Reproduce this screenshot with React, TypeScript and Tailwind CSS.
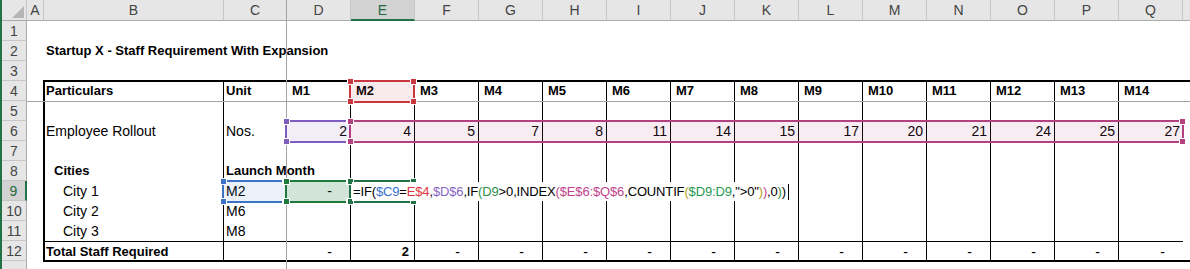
import React from "react";

const letters = ["D", "E", "F", "G", "H", "I", "J", "K", "L", "M", "N", "O", "P", "Q"];
const months = letters.map((_, i) => `M${i + 1}`);
const rollout = [2, 4, 5, 7, 8, 11, 14, 15, 17, 20, 21, 24, 25, 27];

// formula bar pieces, coloured like Excel's reference highlighting
const formula: [string, string][] = [
    ["=IF(", "text-black"],
    ["$C9", "text-[#3a73cf]"],
    ["=", "text-black"],
    ["E$4", "text-[#e0363f]"],
    [",", "text-black"],
    ["$D$6", "text-[#8a66c4]"],
    [",IF", "text-black"],
    ["(", "text-[#2f8f46]"],
    ["D9", "text-[#2f8f46]"],
    [">0,INDEX", "text-black"],
    ["(", "text-[#c2448c]"],
    ["$E$6:$Q$6", "text-[#c2448c]"],
    [",COUNTIF", "text-black"],
    ["(", "text-[#b59a1c]"],
    ["$D9:D9", "text-[#1f9a50]"],
    [',">0"', "text-black"],
    [")", "text-[#b59a1c]"],
    [")", "text-[#c2448c]"],
    [",0", "text-black"],
    [")", "text-[#2f8f46]"],
    [")", "text-black"],
];

function Cell({ col, last, className = "", children }: { col: number; last?: boolean; className?: string; children?: React.ReactNode }) {
    // col 0 = B, 1 = C, 2..15 = D..Q ; no black line between C and D, Q edge comes from the outline
    const right = col === 0 || (col >= 2 && col < 15) ? "border-r border-black" : "";
    const top = last ? "border-t border-black" : "";
    return (
        <div className={`h-[20px] whitespace-nowrap leading-[20px] ${right} ${top} ${className}`}>
            {children}
        </div>
    );
}

function ColumnHeaders() {
    return (
        <div className="flex h-[21px] shrink-0 bg-[#e6e6e6] leading-[20px] text-[#444]">
            <div className="relative w-[25px] shrink-0 border-r border-b border-r-[#c6c6c6] border-b-[#ababab]">
                <svg className="absolute left-[10px] top-[6px]" width="12" height="12" viewBox="0 0 12 12">
                    <polygon points="12,0 12,12 0,12" fill="#b5b5b5" />
                </svg>
            </div>
            <div className="w-[17px] shrink-0 border-r border-b border-r-[#c6c6c6] border-b-[#ababab] text-center">A</div>
            <div className="w-[180px] shrink-0 border-r border-b border-r-[#c6c6c6] border-b-[#ababab] text-center">B</div>
            <div className="w-[63px] shrink-0 border-r border-b border-r-[#a3a3a3] border-b-[#ababab] text-center">C</div>
            {letters.map((l) =>
                l === "E" ? (
                    <div key={l} className="w-[64px] shrink-0 border-r border-b-2 border-r-[#c6c6c6] border-b-[#217346] bg-[#d2d2d2] text-center text-[#1d6a3c]">
                        {l}
                    </div>
                ) : (
                    <div key={l} className="w-[64px] shrink-0 border-r border-b border-r-[#c6c6c6] border-b-[#ababab] text-center">
                        {l}
                    </div>
                )
            )}
            <div className="flex-1 border-b border-[#ababab]" />
        </div>
    );
}

function RowHeaders() {
    return (
        <div className="flex w-[25px] shrink-0 flex-col bg-[#e6e6e6] leading-[20px] text-[#444]">
            {Array.from({ length: 12 }, (_, i) =>
                i === 8 ? (
                    <div key={i} className="h-[20px] border-r-2 border-b border-r-[#217346] border-b-[#c6c6c6] bg-[#d2d2d2] text-center text-[#1d6a3c]">
                        {i + 1}
                    </div>
                ) : (
                    <div key={i} className="h-[20px] border-r border-b border-r-[#ababab] border-b-[#c6c6c6] text-center">
                        {i + 1}
                    </div>
                )
            )}
            <div className="flex-1 border-r border-[#ababab]" />
        </div>
    );
}

function Box({ className, handle }: { className: string; handle: string }) {
    return (
        <div className={`pointer-events-none absolute h-[23px] border-2 ${className}`}>
            <span className={`absolute -left-[4px] -top-[4px] h-[7px] w-[7px] border border-white ${handle}`} />
            <span className={`absolute -right-[4px] -top-[4px] h-[7px] w-[7px] border border-white ${handle}`} />
            <span className={`absolute -left-[4px] -bottom-[4px] h-[7px] w-[7px] border border-white ${handle}`} />
            <span className={`absolute -right-[4px] -bottom-[4px] h-[7px] w-[7px] border border-white ${handle}`} />
        </div>
    );
}

function Sheet() {
    return (
        <div className="relative flex min-w-0 flex-1 flex-col">
            {/* rows 1-3 */}
            <div className="h-[20px]" />
            <div className="h-[20px] whitespace-nowrap pl-[19px] text-[13px] font-bold leading-[20px]">
                Startup X - Staff Requirement With Expansion
            </div>
            <div className="h-[20px]" />

            {/* table B4:Q12 */}
            <div className="ml-[17px] grid w-[1156px] grid-cols-[180px_63px_repeat(14,64px)] outline-2 -outline-offset-1 outline-black">
                {/* row 4 */}
                <Cell col={0} className="pl-[2px] text-[13px] font-bold">Particulars</Cell>
                <Cell col={1} className="pl-[2px] text-[13px] font-bold">Unit</Cell>
                {months.map((m, i) => (
                    <Cell key={m} col={i + 2} className="pl-[5px] text-[13px] font-bold">{m}</Cell>
                ))}

                {/* row 5 */}
                {Array.from({ length: 16 }, (_, i) => <Cell key={`r5-${i}`} col={i} />)}

                {/* row 6 */}
                <Cell col={0} className="pl-[2px]">Employee Rollout</Cell>
                <Cell col={1} className="pl-[2px]">Nos.</Cell>
                {rollout.map((n, i) => (
                    <Cell key={`r6-${i}`} col={i + 2} className="pr-[3px] text-right">{n}</Cell>
                ))}

                {/* row 7 */}
                {Array.from({ length: 16 }, (_, i) => <Cell key={`r7-${i}`} col={i} />)}

                {/* row 8 */}
                <Cell col={0} className="pl-[10px] text-[13px] font-bold">Cities</Cell>
                <Cell col={1} className="pl-[2px] text-[13px] font-bold">Launch Month</Cell>
                {letters.map((l, i) => <Cell key={`r8-${l}`} col={i + 2} />)}

                {/* rows 9-11 */}
                {[
                    ["City 1", "M2"],
                    ["City 2", "M6"],
                    ["City 3", "M8"],
                ].map(([city, launch], r) => (
                    <React.Fragment key={city}>
                        <Cell col={0} className="pl-[19px]">{city}</Cell>
                        <Cell col={1} className="pl-[2px]">{launch}</Cell>
                        {letters.map((l, i) => (
                            <Cell key={l} col={i + 2} className="pr-[18px] text-right">
                                {r === 0 && i === 0 ? "-" : ""}
                            </Cell>
                        ))}
                    </React.Fragment>
                ))}

                {/* row 12 */}
                <Cell col={0} last className="pl-[2px] text-[13px] font-bold">Total Staff Required</Cell>
                <Cell col={1} last />
                {letters.map((l, i) =>
                    i === 1 ? (
                        <Cell key={`r12-${l}`} col={i + 2} last className="pr-[5px] text-right text-[13px] font-bold">2</Cell>
                    ) : (
                        <Cell key={`r12-${l}`} col={i + 2} last className="pr-[18px] text-right">-</Cell>
                    )
                )}
            </div>
            <div className="h-[20px]" />

            {/* freeze panes */}
            <div className="absolute left-[259px] top-0 bottom-0 w-px bg-[#a3a3a3]" />
            <div className="absolute left-0 right-0 top-[80px] h-px bg-[#a3a3a3]" />

            {/* reference highlights */}
            <Box className="left-[322px] top-[59px] w-[66px] border-[#c8373f] bg-[#c8373f]/10" handle="bg-[#c8373f]" />
            <Box className="left-[258px] top-[99px] w-[66px] border-[#7f5cbf] bg-[#7f5cbf]/10" handle="bg-[#7f5cbf]" />
            <Box className="left-[322px] top-[99px] w-[835px] border-[#b3407f] bg-[#b3407f]/10" handle="bg-[#b3407f]" />
            <Box className="left-[195px] top-[159px] w-[65px] border-[#3d72c9] bg-[#3d72c9]/10" handle="bg-[#3d72c9]" />
            <Box className="left-[258px] top-[159px] w-[66px] border-[#1f7a3d] bg-[#1f7a3d]/20" handle="bg-[#1f7a3d]" />
            <Box className="left-[322px] top-[159px] w-[66px] border-[#217346]" handle="bg-[#217346]" />

            {/* in-cell editor for E9, drawn over the active cell's right edge */}
            <div className="absolute left-[325px] top-[161px] flex h-[19px] w-[440px] items-center whitespace-nowrap bg-white pl-[1px] text-[13px] leading-[19px] tracking-[-0.15px]">
                {formula.map(([t, c], i) => (
                    <span key={i} className={c}>{t}</span>
                ))}
                <span className="ml-[2px] h-[16px] w-px bg-black" />
            </div>
        </div>
    );
}

export default function App() {
    return (
        <div className="flex h-[269px] w-[1190px] overflow-hidden bg-white font-['Liberation_Sans',Arial,sans-serif] text-[14px] text-black">
            <div className="w-[2px] shrink-0 bg-[#217346]" />
            <div className="flex min-w-0 flex-1 flex-col">
                <ColumnHeaders />
                <div className="flex flex-1">
                    <RowHeaders />
                    <Sheet />
                </div>
            </div>
        </div>
    );
}
